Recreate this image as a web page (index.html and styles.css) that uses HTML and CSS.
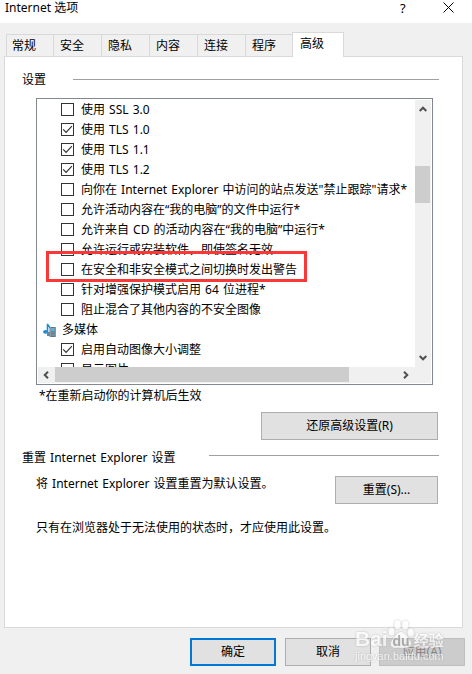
FILE: index.html
```html
<!DOCTYPE html>
<html lang="zh-CN">
<head>
<meta charset="UTF-8">
<meta name="viewport" content="width=device-width, initial-scale=1.0">
<title>Internet 选项</title>
<link rel="stylesheet" href="styles.css">
</head>
<body>

<div class="window">
    <div class="titlebar">
        <span class="title">Internet 选项</span>
        <span class="help">?</span>
        <svg class="close" width="11" height="11" viewBox="0 0 11 11"><path d="M.5.5l10 10M10.5.5l-10 10"/></svg>
    </div>

    <div class="tabs">
        <div class="tab">常规</div>
        <div class="tab">安全</div>
        <div class="tab">隐私</div>
        <div class="tab">内容</div>
        <div class="tab">连接</div>
        <div class="tab">程序</div>
        <div class="tab active">高级</div>
    </div>

    <div class="panel">
        <div class="group-title first"><span>设置</span><i></i></div>

        <div class="list">
            <div class="rows">
                <div class="row"><b class="check"></b><span>使用 SSL 3.0</span></div>
                <div class="row"><b class="check"><svg viewBox="0 0 11 11"><path d="M1.2 5.3l2.9 3 5.8-6.1"/></svg></b><span>使用 TLS 1.0</span></div>
                <div class="row"><b class="check"><svg viewBox="0 0 11 11"><path d="M1.2 5.3l2.9 3 5.8-6.1"/></svg></b><span>使用 TLS 1.1</span></div>
                <div class="row"><b class="check"><svg viewBox="0 0 11 11"><path d="M1.2 5.3l2.9 3 5.8-6.1"/></svg></b><span>使用 TLS 1.2</span></div>
                <div class="row"><b class="check"></b><span>向你在 Internet Explorer 中访问的站点发送"禁止跟踪"请求*</span></div>
                <div class="row"><b class="check"></b><span>允许活动内容在“我的电脑”的文件中运行*</span></div>
                <div class="row"><b class="check"></b><span>允许来自 CD 的活动内容在“我的电脑”中运行*</span></div>
                <div class="row"><b class="check"></b><span>允许运行或安装软件，即使签名无效</span></div>
                <div class="row marked"><b class="check"></b><span>在安全和非安全模式之间切换时发出警告</span></div>
                <div class="row"><b class="check"></b><span>针对增强保护模式启用 64 位进程*</span></div>
                <div class="row"><b class="check"></b><span>阻止混合了其他内容的不安全图像</span></div>
                <div class="row category">
                    <svg class="media" width="13" height="14" viewBox="0 0 13 14">
                        <path d="M4.5 9V.8c.2 2 2.2 2.4 2.6 4.4" fill="none" stroke="#1a8fd6" stroke-width="1.6"/>
                        <ellipse cx="2.6" cy="8.8" rx="2.6" ry="1.9" fill="#1a8fd6"/>
                        <path d="M4 9h4v4H4z" fill="#6d8795"/>
                        <path d="M6.5 4H13v10H6.5z" fill="#5a7482"/>
                        <path d="M8.2 5h3.2v3.4H8.2z" fill="#5cb4e6"/>
                        <path d="M8.2 9.4h3.2v3.4H8.2z" fill="#4aa3d8"/>
                        <path d="M9 10h1.5v1.5H9z" fill="#c8524a"/>
                        <path d="M7.3 4.5V14M12.2 4.5V14" stroke="#dce8ee" stroke-width=".9" stroke-dasharray="1 1"/>
                    </svg>
                    <span>多媒体</span>
                </div>
                <div class="row"><b class="check"><svg viewBox="0 0 11 11"><path d="M1.2 5.3l2.9 3 5.8-6.1"/></svg></b><span>启用自动图像大小调整</span></div>
                <div class="row"><b class="check"></b><span>显示图片</span></div>
            </div>
            <div class="vscroll">
                <svg class="arrow" width="8" height="6" viewBox="0 0 8 6"><path d="M.7 5L4 1.7 7.3 5"/></svg>
                <div class="vthumb"></div>
                <svg class="arrow" width="8" height="6" viewBox="0 0 8 6"><path d="M.7 1L4 4.3 7.3 1"/></svg>
            </div>
            <div class="hscroll">
                <svg class="arrow" width="6" height="8" viewBox="0 0 6 8"><path d="M5 .7L1.7 4 5 7.3"/></svg>
                <div class="hthumb"></div>
                <svg class="arrow" width="6" height="8" viewBox="0 0 6 8"><path d="M1 .7L4.3 4 1 7.3"/></svg>
            </div>
        </div>

        <p class="note">*在重新启动你的计算机后生效</p>
        <div class="button restore">还原高级设置(R)</div>

        <div class="group-title second"><span>重置 Internet Explorer 设置</span><i></i></div>
        <div class="reset">
            <p>将 Internet Explorer 设置重置为默认设置。</p>
            <div class="button">重置(S)...</div>
        </div>
        <p class="hint">只有在浏览器处于无法使用的状态时，才应使用此设置。</p>
    </div>

    <div class="footer">
        <div class="button default">确定</div>
        <div class="button">取消</div>
        <div class="button disabled">应用(A)</div>
    </div>

    <div class="watermark">
        <div class="brand">
            <span>Bai</span>
            <svg width="26" height="28" viewBox="0 0 26 28">
                <ellipse cx="9.5" cy="4.7" rx="3.2" ry="4.4"/>
                <ellipse cx="17.3" cy="5" rx="3.2" ry="4.4"/>
                <ellipse cx="3.5" cy="11.5" rx="3" ry="4"/>
                <ellipse cx="22.8" cy="12.5" rx="3" ry="4"/>
                <path d="M13 12c4 0 5 4 8 7 4 4 2 9-3 9-3 0-7-.6-10 0-6 0-7-5-3-9 3-3 4-7 8-7z"/>
                <text x="13" y="26" text-anchor="middle">du</text>
            </svg>
            <span class="cn">经验</span>
        </div>
        <div class="site">jingyan.baidu.com</div>
    </div>
</div>

</body>
</html>
```

FILE: styles.css
```css
* {
    box-sizing: border-box;
}

body {
    margin: 0;
    font-family: "Noto Sans", "Noto Sans CJK SC", sans-serif;
    font-size: 12px;
    line-height: 20px;
    color: #000;
}

p {
    margin: 0;
}

.window {
    position: relative;
    width: 472px;
    height: 674px;
    background: #f0f0f0;
    overflow: hidden;
    white-space: nowrap;
}

.titlebar {
    display: flex;
    align-items: center;
    height: 23px;
    padding: 0 18px 8px 5px;
    background: #fff;
}

.title {
    flex: 1;
}

.help {
    width: 9px;
    margin-right: 34px;
    font-size: 13px;
}

.close {
    fill: none;
    stroke: #000;
}

/* вкладки */
.tabs {
    display: flex;
    align-items: flex-end;
    height: 34px;
    padding-left: 6px;
}

.tab {
    width: 48px;
    height: 23px;
    padding-left: 5px;
    border: 1px solid #d9d9d9;
    border-right: none;
    line-height: 21px;
}

.tab:first-child,
.tab:nth-child(6) {
    width: 47px;
}

.tab:nth-child(n+2) {
    padding-left: 6px;
}

.tab.active {
    position: relative;
    width: 52px;
    height: 25px;
    padding-left: 7px;
    border-right: 1px solid #d9d9d9;
    border-bottom: none;
    background: #fff;
    line-height: 22px;
}

.panel {
    height: 572px;
    margin: -1px 9px 0 4px;
    padding: 13px 23px 0 17px;
    background: #fff;
    border: 1px solid #d9d9d9;
    word-spacing: 1px;
}

.group-title {
    display: flex;
    align-items: flex-start;
    height: 20px;
}

.group-title i {
    height: 1px;
    margin-left: auto;
    background: #a0a0a0;
}

.first i {
    width: 366px;
    margin-top: 9px;
}

.second i {
    width: 230px;
    margin-top: 8px;
}

.second span {
    padding-top: 1px;
}

/* список */
.list {
    display: grid;
    grid-template-columns: 1fr 16px;
    grid-template-rows: 267px 16px;
    width: 397px;
    height: 287px;
    margin: 8px 0 0 14px;
    padding: 1px;
    border: 1px solid #828790;
}

.rows {
    height: 267px;
    padding-left: 23px;
    overflow: hidden;
}

.row {
    display: flex;
    align-items: flex-start;
    height: 20px;
}

.check {
    width: 13px;
    height: 13px;
    margin: 3px 7px 0 0;
    border: 1px solid #333;
    background: #fff;
}

.check svg {
    display: block;
    width: 11px;
    height: 11px;
    fill: none;
    stroke: #333;
    stroke-width: 1.2;
}

.category {
    margin-left: -18px;
}

.media {
    margin: 3px 6px 0 0;
}

.marked {
    position: relative;
}

.marked::after {
    content: "";
    position: absolute;
    left: -15px;
    top: -9px;
    width: 255px;
    height: 25px;
    border: 3px solid #fb3838;
}

.vscroll {
    display: flex;
    flex-direction: column;
    align-items: center;
    justify-content: space-between;
    padding: 6px 1px 6px 0;
    background: #f0f0f0;
}

.vthumb {
    width: 15px;
    height: 37px;
    margin-bottom: 98px;
    background: #cdcdcd;
}

.hscroll {
    display: flex;
    grid-column: 1 / 3;
    align-items: center;
    padding: 0 22px 1px 5px;
    background: #f0f0f0;
}

.hthumb {
    width: 294px;
    height: 15px;
    margin: 0 auto 0 6px;
    background: #cdcdcd;
}

.arrow {
    fill: none;
    stroke: #505050;
    stroke-width: 2;
}

.note {
    margin: 1px 0 0 17px;
}

.button {
    display: flex;
    align-items: center;
    justify-content: center;
    width: 103px;
    height: 28px;
    background: #e1e1e1;
    border: 1px solid #adadad;
}

.restore {
    width: 177px;
    margin: 6px 1px 0 auto;
}

.second {
    margin-top: 7px;
}

.reset {
    display: flex;
    justify-content: space-between;
    margin: 9px 1px 0 14px;
}

.reset p {
    margin-top: -2px;
}

.hint {
    margin: 14px 0 0 14px;
}

.footer {
    display: flex;
    gap: 9px;
    padding: 10px 0 0 190px;
}

.footer .button {
    width: 86px;
}

.footer .default {
    border: 2px solid #0078d7;
}

.footer .disabled {
    margin-left: -1px;
    background: #ccc;
    border-color: #bfbfbf;
    color: #838383;
}

/* водяной знак поверх окна */
.watermark {
    position: absolute;
    left: 355px;
    top: 620px;
    width: 90px;
    color: #fff;
    opacity: .7;
    filter: drop-shadow(0 0 1px #aaa);
}

.brand {
    display: flex;
    align-items: flex-end;
    height: 28px;
    font: bold 21px/18px "Liberation Sans", "Noto Sans CJK SC", sans-serif;
}

.brand svg {
    flex: none;
    fill: #fff;
}

.brand text {
    fill: #999;
    font-size: 14px;
}

.brand .cn {
    font-size: 15px;
    line-height: 14px;
}

.site {
    font: 11px/14px "Liberation Sans", sans-serif;
    margin-top: 1px;
}
```
